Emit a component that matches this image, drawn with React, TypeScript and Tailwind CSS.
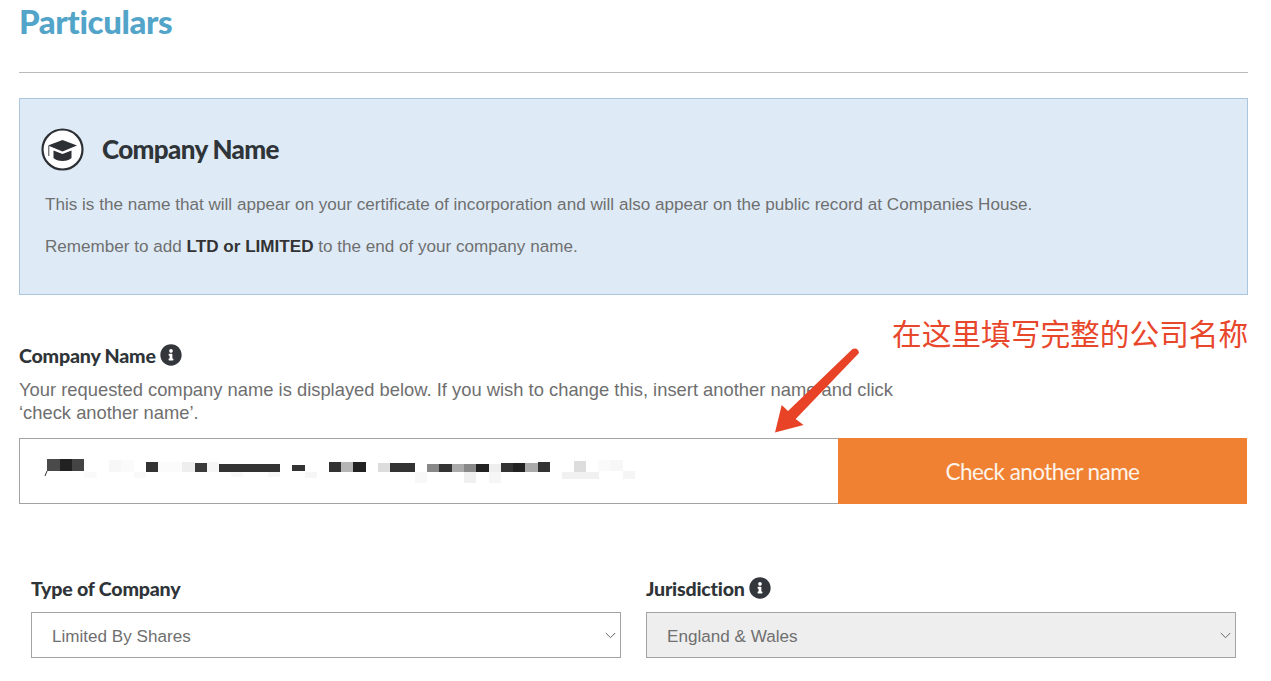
import React from "react";
import { FaInfoCircle } from "react-icons/fa";

const heading = { fontFamily: 'Lato, sans-serif', fontVariantLigatures: "none" } as const;
const body = { fontFamily: '"Liberation Sans", Arial, sans-serif' };

const blocks: [number, number, number, number, string][] = [
  [47, 459, 13, 12, "#4a4a4a"], [60, 459, 12, 12, "#222222"], [72, 459, 12, 12, "#444444"],
  [84, 472, 13, 6, "#fafafa"], [109, 460, 12, 12, "#f7f7f7"], [121, 460, 13, 12, "#fbfbfb"],
  [134, 472, 12, 6, "#f9f9f9"], [146, 462, 12, 10, "#333333"], [158, 462, 24, 10, "#fbfbfb"],
  [182, 462, 13, 10, "#eeeeee"], [195, 463, 12, 9, "#3a3a3a"], [207, 462, 12, 10, "#f6f6f6"],
  [219, 464, 61, 8, "#333333"], [292, 465, 13, 6, "#333333"], [231, 472, 12, 5, "#f9f9f9"],
  [268, 472, 12, 5, "#f8f8f8"], [305, 472, 12, 6, "#f6f6f6"], [329, 462, 12, 10, "#333333"],
  [341, 462, 12, 10, "#b5b5b5"], [353, 462, 13, 10, "#222222"], [378, 463, 12, 9, "#dddddd"],
  [390, 463, 25, 9, "#333333"], [415, 472, 12, 11, "#f8f8f8"], [427, 464, 12, 8, "#888888"],
  [439, 464, 13, 8, "#333333"], [452, 464, 12, 8, "#aaaaaa"], [464, 464, 12, 8, "#888888"],
  [476, 464, 13, 8, "#222222"], [489, 464, 12, 8, "#eeeeee"], [464, 472, 12, 11, "#f0f0f0"],
  [489, 472, 12, 11, "#f6f6f6"], [501, 463, 12, 9, "#333333"], [513, 463, 12, 9, "#222222"],
  [525, 463, 13, 9, "#aaaaaa"], [538, 462, 12, 10, "#333333"], [574, 461, 12, 11, "#dddddd"],
  [562, 472, 37, 7, "#f1f1f1"], [598, 460, 12, 11, "#fafafa"], [610, 460, 13, 11, "#f7f7f7"],
  [623, 471, 12, 8, "#f5f5f5"],
];

function Info() {
  return <FaInfoCircle className="text-[22px] text-[#33373b] shrink-0 -mt-[3px]" />;
}

function Label({ children, info }: { children: string; info?: boolean }) {
  return (
    <div className="flex items-center gap-[4px] h-[24px] text-[19.6px] font-black text-[#2f3438] tracking-[-0.2px]" style={heading}>
      <span>{children}</span>
      {info && <Info />}
    </div>
  );
}

function Select({ value, disabled }: { value: string; disabled?: boolean }) {
  return (
    <div className={`flex items-center justify-between h-[46px] border border-[#a3a3a3] pl-[20px] pr-[4px] text-[17.1px] text-[#6f6f6f] ${disabled ? "bg-[#eeeeee]" : "bg-white"}`} style={body}>
      <span className="pt-[3px]">{value}</span>
      <svg width="11" height="7" viewBox="0 0 11 7" fill="none" stroke="#666" strokeWidth="1"><path d="M0.8 1l4.7 4.7L10.2 1" /></svg>
    </div>
  );
}

export default function App() {
  return (
    <div className="relative w-[1271px] h-[681px] overflow-hidden bg-white pl-[19px] pr-[23px]">
      <h1 className="h-[72px] pt-[2px] text-[33px] leading-[38px] font-black text-[#52a4c9] tracking-[-0.4px]" style={heading}>Particulars</h1>
      <div className="h-px bg-[#bcbcbc]" />

      <section className="mt-[25px] h-[197px] border border-[#a9c6de] bg-[#deebf7] pl-[21px] pt-[28px]" style={body}>
        <div className="flex items-center gap-[18px] h-[44px]">
          <svg width="43" height="43" viewBox="0 0 43 43" className="shrink-0">
            <circle cx="21.5" cy="21.5" r="20" fill="#fff" stroke="#2c2f33" strokeWidth="2.2" />
            <path d="M7 17.5L21.5 12L36 17.5L21.5 23.5Z" fill="#2c2f33" />
            <path d="M12.5 22.5L21.5 26L30.5 22.5V30C27 34 16 34 12.5 30Z" fill="#2c2f33" />
            <path d="M7.8 18V28" stroke="#2c2f33" strokeWidth="0.9" />
          </svg>
          <h2 className="text-[26px] pt-[1px] font-black text-[#2f3438] tracking-[-0.65px]" style={heading}>Company Name</h2>
        </div>
        <p className="mt-[22px] pl-[4px] text-[17.1px] leading-[24px] text-[#6f6f6f]">This is the name that will appear on your certificate of incorporation and will also appear on the public record at Companies House.</p>
        <p className="mt-[18px] pl-[4px] text-[17.1px] leading-[24px] text-[#6f6f6f]">Remember to add <strong className="font-bold text-[#333]">LTD or LIMITED</strong> to the end of your company name.</p>
      </section>

      <div className="mt-[49px]">
        <Label info>Company Name</Label>
      </div>
      <p className="mt-[10px] w-[890px] text-[18.36px] leading-[23px] text-[#6f6f6f]" style={body}>
        Your requested company name is displayed below. If you wish to change this, insert another name and click<br />‘check another name’.
      </p>

      <div className="mt-[14px] flex h-[66px] w-[1228px]">
        <div className="flex-1 border border-[#a3a3a3] border-r-0 bg-white" />
        <button className="w-[409px] bg-[#f08132] pt-[2px] text-[22.5px] tracking-[-0.55px] text-[#fdf3ea]" style={heading}>Check another name</button>
      </div>

      <div className="mt-[73px] ml-[12px] grid w-[1205px] grid-cols-[590px_590px] gap-x-[25px]">
        <div>
          <Label>Type of Company</Label>
          <div className="mt-[11px]"><Select value="Limited By Shares" /></div>
        </div>
        <div>
          <Label info>Jurisdiction</Label>
          <div className="mt-[11px]"><Select value="England &amp; Wales" disabled /></div>
        </div>
      </div>

      <svg className="absolute left-0 top-0 pointer-events-none" width="1271" height="681">
        {blocks.map(([x, y, w, h, c], i) => <rect key={i} x={x} y={y} width={w} height={h} fill={c} />)}
        <path d="M47 471l-2 5" stroke="#333" strokeWidth="1" />
        <path d="M852.5 349Q858 347 859 353L795.7 419L803.5 425L775 432.5L781.7 405L788 411Z" fill="#e84327" />
      </svg>
      <div className="absolute left-[892px] top-[314px] text-[29.7px] leading-[38px] text-[#e8472c] whitespace-nowrap" style={{ fontFamily: '"Noto Sans CJK SC", sans-serif' }}>在这里填写完整的公司名称</div>
    </div>
  );
}
